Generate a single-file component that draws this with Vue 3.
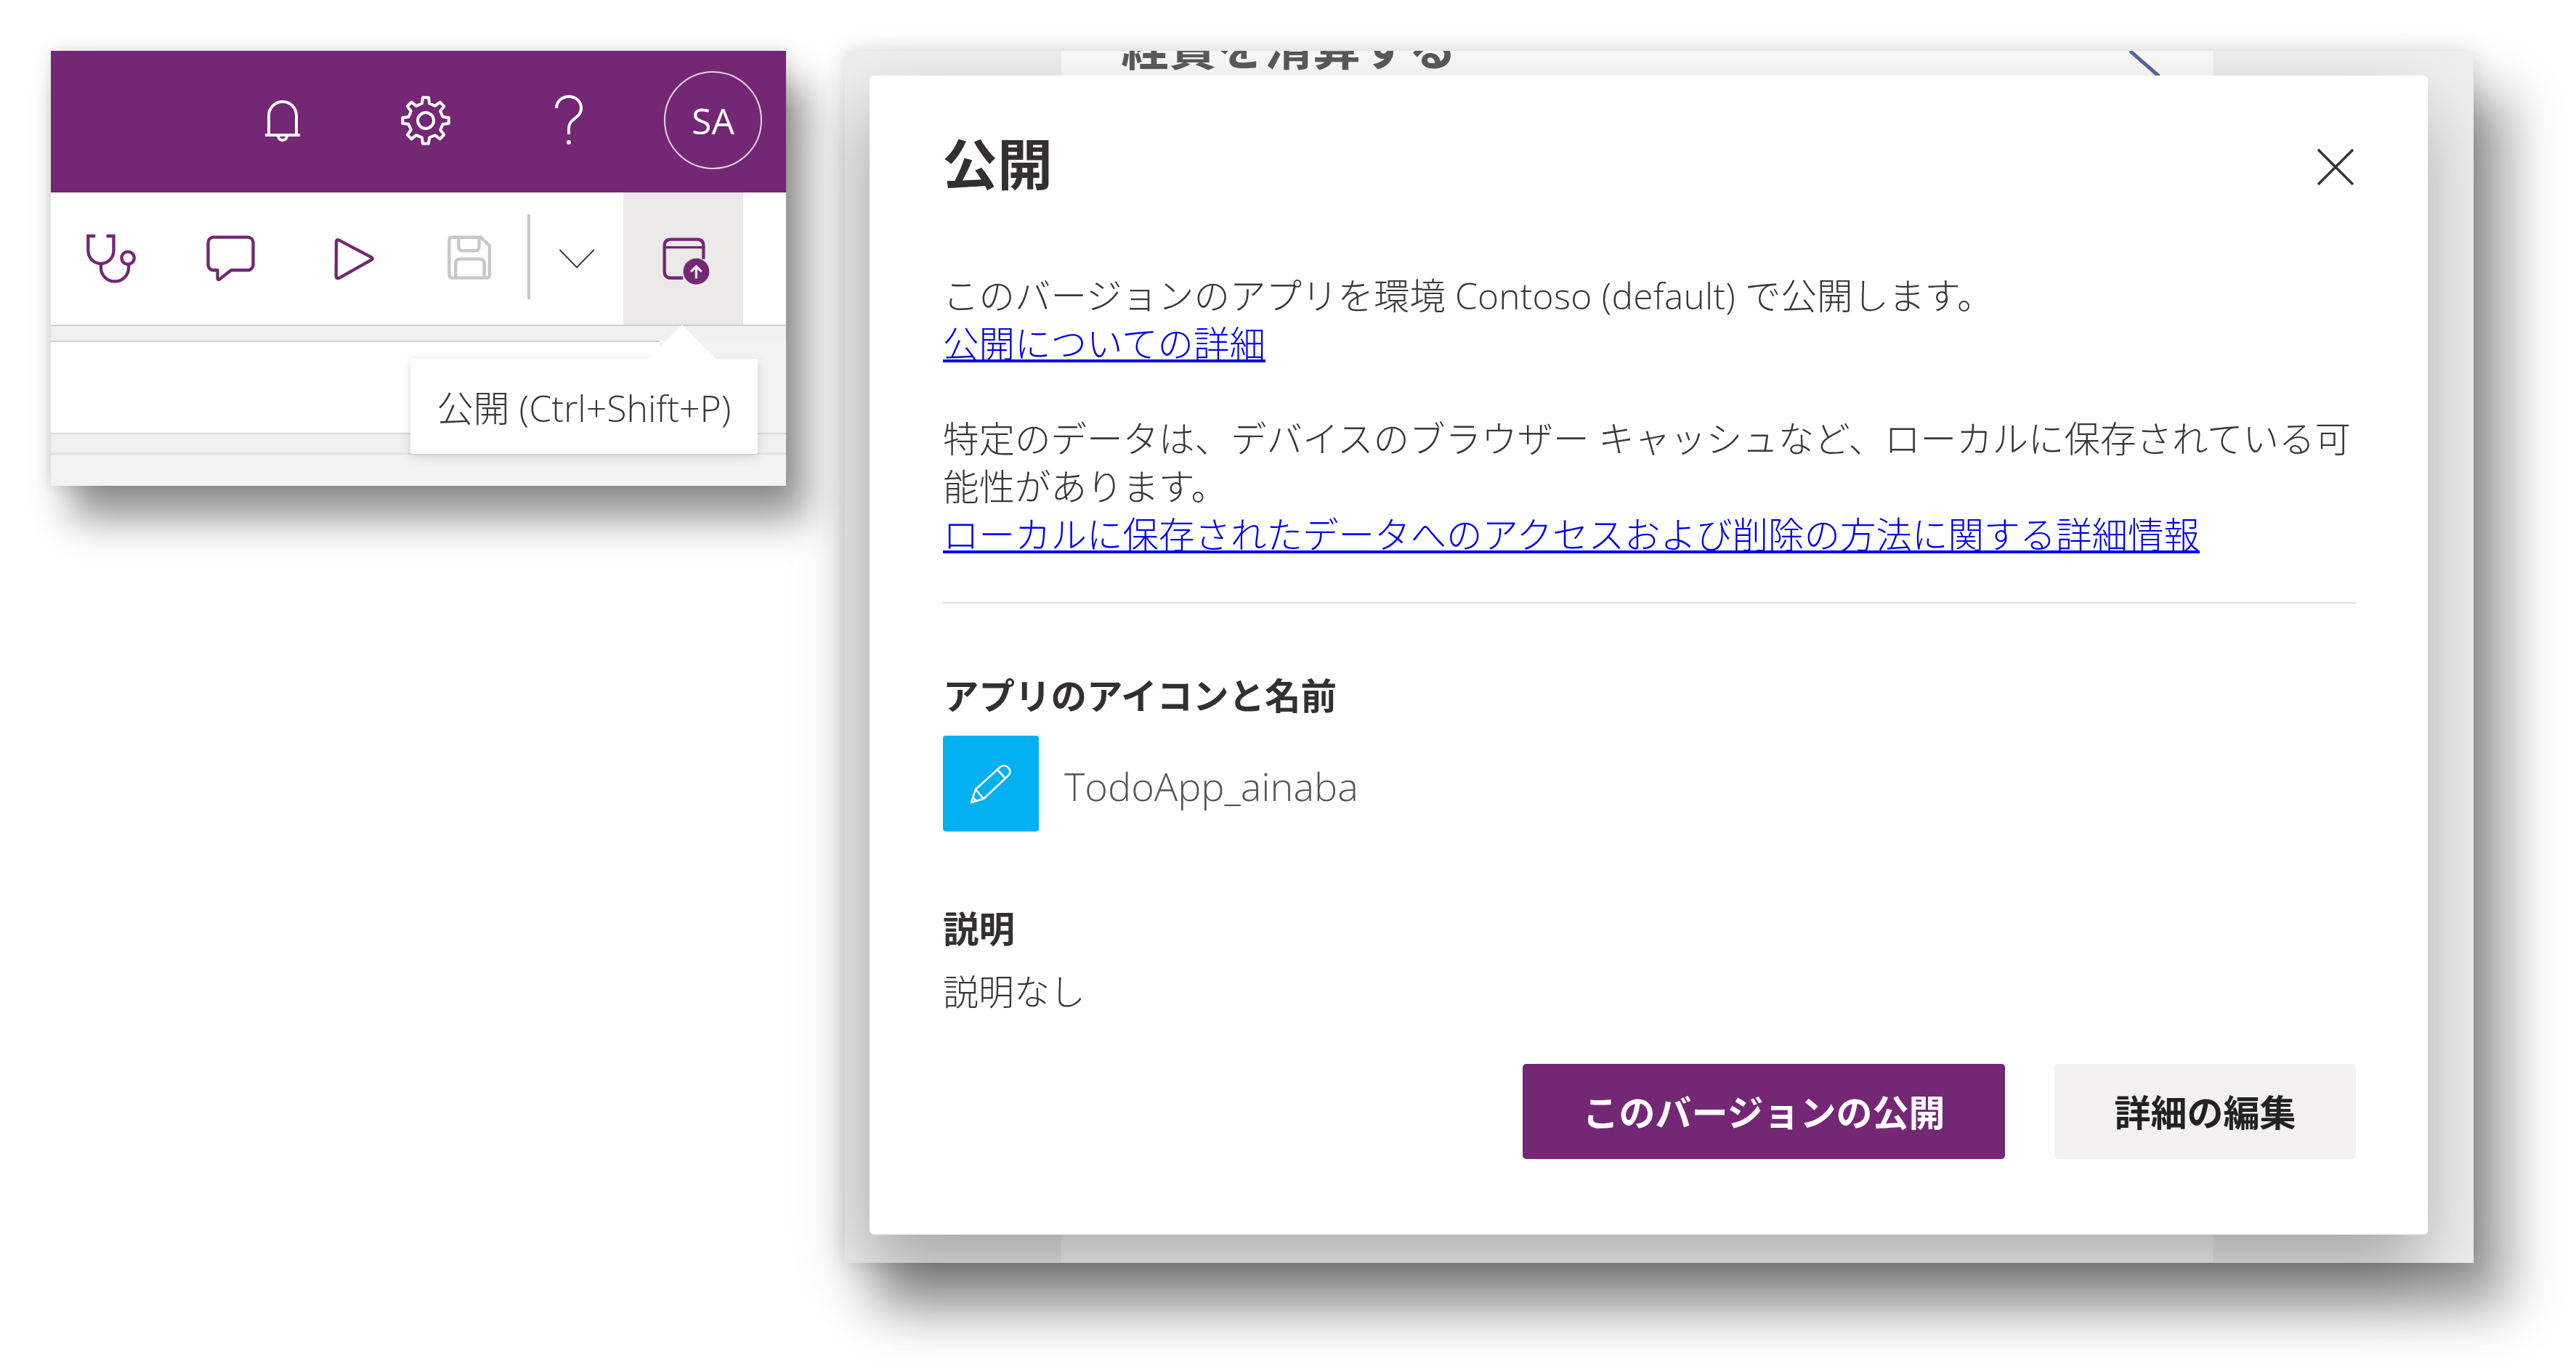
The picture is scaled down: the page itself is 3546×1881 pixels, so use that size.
<script setup>
// Publish flow: the studio toolbar with its tooltip, and the publish dialog.
const cx = 34
const cy = 34

// eight-tooth gear outline, easier to generate than to write by hand
function gearPath(teeth, outer, inner) {
  const step = (Math.PI * 2) / teeth
  const pts = []
  for (let i = 0; i < teeth; i++) {
    const a = i * step
    const w = step * 0.16
    const v = step * 0.27
    pts.push([a - v, inner], [a - w, outer], [a + w, outer], [a + v, inner])
  }
  return pts
    .map(([a, r], i) => `${i ? 'L' : 'M'}${(cx + r * Math.cos(a)).toFixed(1)} ${(cy + r * Math.sin(a)).toFixed(1)}`)
    .join(' ') + ' Z'
}
const gear = gearPath(8, 32, 24)
</script>

<template>
  <div class="page">
    <section class="studio">
      <header class="topbar">
        <span class="top-cell">
          <svg width="52" height="60" viewBox="0 0 52 60" fill="none" stroke="#fff" stroke-width="4">
            <path d="M7 49V23a19 19 0 0 1 38 0V49" />
            <path d="M2 50H50" />
            <path d="M20 51a6 6 0 0 0 12 0" />
          </svg>
        </span>
        <span class="top-cell">
          <svg width="68" height="68" viewBox="0 0 68 68" fill="none" stroke="#fff" stroke-width="4" stroke-linejoin="round">
            <path :d="gear" />
            <circle cx="34" cy="34" r="11" />
          </svg>
        </span>
        <span class="top-cell">
          <svg width="40" height="70" viewBox="0 0 40 70" fill="none" stroke="#fff" stroke-width="4">
            <path d="M3 18C3 8 11 2 20 2C30 2 37 9 37 18C37 26 31 30 26 34C22 37 20 40 20 46V54" />
            <circle cx="20" cy="65" r="3" fill="#fff" stroke="none" />
          </svg>
        </span>
        <span class="avatar">SA</span>
      </header>

      <div class="toolbar">
        <span class="tool">
          <svg width="68" height="68" viewBox="115 155 205 205" fill="none" stroke="#742774" stroke-width="13">
            <path d="M152 164H122V225a53 53 0 0 0 106 0V164H198" />
            <path d="M175 280V295a57 57 0 0 0 115 0V282" />
            <circle cx="287" cy="255" r="26" />
          </svg>
        </span>
        <span class="tool tool-comment">
          <svg width="72" height="65" viewBox="605 170 215 195" fill="none" stroke="#742774" stroke-width="13" stroke-linejoin="round">
            <path d="M643 178H785a22 22 0 0 1 22 22V292a22 22 0 0 1-22 22H716L668 352q-8 4-8-6V314H643a22 22 0 0 1-22-22V200a22 22 0 0 1 22-22Z" />
          </svg>
        </span>
        <span class="tool tool-play">
          <svg width="58" height="60" viewBox="1140 170 175 180" fill="none" stroke="#742774" stroke-width="13" stroke-linejoin="round">
            <path d="M1152 190q0-12 12-6L1298 255q8 6 0 10L1165 340q-12 6-14-6Z" />
          </svg>
        </span>
        <span class="tool tool-save">
          <svg width="64" height="64" viewBox="110 170 190 190" fill="none" stroke="#c8c8c8" stroke-width="13">
            <path d="M120 190q0-12 12-12H248L285 212V330q0 14-14 14H134q-14 0-14-14Z" />
            <path d="M158 180V215q0 18 18 18H228q14 0 14-18V180" />
            <path d="M146 342V285q0-18 18-18H245q18 0 18 18V342" />
          </svg>
        </span>
        <span class="tool-sep"></span>
        <span class="tool tool-more">
          <svg width="50" height="28" viewBox="562 210 152 82" fill="none" stroke="#333" stroke-width="6">
            <path d="M566 214L638 288L710 214" />
          </svg>
        </span>
        <span class="tool tool-active">
          <svg width="68" height="68" viewBox="995 172 205 205" fill="none">
            <path d="M1080 340H1030q-27 0-27-27V207q0-27 27-27H1138q27 0 27 27V262" stroke="#742774" stroke-width="13" />
            <path d="M1003 213H1165" stroke="#742774" stroke-width="10" />
            <circle cx="1135" cy="313" r="54" fill="#742774" />
            <path d="M1135 342V292M1113 314L1135 292L1157 314" stroke="#f2e9f2" stroke-width="10" />
          </svg>
        </span>
      </div>

      <div class="strip"></div>
      <div class="canvas-row"></div>
      <div class="strip strip-low"></div>
      <div class="statusbar"></div>

      <div class="tooltip">公開 (Ctrl+Shift+P)</div>
    </section>

    <section class="backdrop">
      <div class="behind">
        <h2 class="behind-title">経費を清算する</h2>
        <svg class="behind-stroke" width="44" height="36" viewBox="0 0 44 36" fill="none" stroke="#5a64a0" stroke-width="5">
          <path d="M1 0L41 35" />
        </svg>
      </div>

      <div class="dialog">
        <div class="dialog-head">
          <h1>公開</h1>
          <svg width="52" height="52" viewBox="0 0 52 52" fill="none" stroke="#333" stroke-width="3.5">
            <path d="M2 2L50 50M50 2L2 50" />
          </svg>
        </div>

        <p class="body-text">
          このバージョンのアプリを環境 <span class="latin">Contoso (default)</span> で公開します。<br />
          <a href="#">公開についての詳細</a>
        </p>
        <p class="body-text second">
          特定のデータは、デバイスのブラウザー キャッシュなど、ローカルに保存されている可<br />能性があります。<br />
          <a href="#">ローカルに保存されたデータへのアクセスおよび削除の方法に関する詳細情報</a>
        </p>

        <hr class="divider" />

        <h3 class="label">アプリのアイコンと名前</h3>
        <div class="app-row">
          <span class="app-icon">
            <svg width="58" height="56" viewBox="0 0 58 56" fill="none" stroke="#fff" stroke-width="2.6" stroke-linejoin="round">
              <path d="M2 54L8 36L42 5q6-4 11 1q5 5 0 11L19 49Z" />
              <path d="M8 36L19 49M38 9L49 21M4 47L10 53" />
            </svg>
          </span>
          <span class="app-name">TodoApp_ainaba</span>
        </div>

        <h3 class="label label-desc">説明</h3>
        <p class="desc">説明なし</p>

        <div class="actions">
          <button type="button" class="btn btn-primary">このバージョンの公開</button>
          <button type="button" class="btn">詳細の編集</button>
        </div>
      </div>
    </section>
  </div>
</template>

<style>
html, body { margin: 0; background: #fff; }
</style>

<style scoped>
.page {
  display: flex;
  align-items: flex-start;
  gap: 81px;
  width: 3546px;
  height: 1881px;
  padding: 70px 0 0 70px;
  box-sizing: border-box;
  overflow: hidden;
  background: #fff;
  font-family: "Open Sans", "Noto Sans CJK JP", sans-serif;
  color: #383838;
}

/* left: studio toolbar */
.studio {
  position: relative;
  flex: none;
  width: 1012px;
  height: 599px;
  background: #f3f3f3;
  box-shadow: 0 0 22px rgba(0, 0, 0, 0.15), 28px 46px 50px rgba(0, 0, 0, 0.42);
}
.topbar {
  display: flex;
  align-items: center;
  height: 191px;
  padding: 0 0 4px 220px;
  background: #742774;
}
.top-cell {
  display: flex;
  justify-content: center;
  width: 197px;
}
.avatar {
  display: flex;
  align-items: center;
  justify-content: center;
  width: 131px;
  height: 131px;
  margin-left: 33px;
  border: 2px solid #e6d6e6;
  border-radius: 50%;
  color: #fff;
  font-size: 50px;
}
.toolbar {
  display: flex;
  align-items: stretch;
  height: 182px;
  background: #fff;
}
.tool {
  display: flex;
  align-items: center;
  justify-content: center;
  width: 165px;
}
.tool-comment { width: 163px; }
.tool-play { width: 180px; }
.tool-save { width: 138px; }
.tool-sep {
  width: 4px;
  height: 117px;
  margin: 30px 0 0 10px;
  background: #c8c8c8;
}
.tool-more { width: 128px; }
.tool-active {
  padding: 10px 0 0 10px;
  box-sizing: border-box;
  background: #ebeae8;
}
.strip {
  height: 20px;
  background: #f0f0f0;
  border-top: 2px solid #d0d0d0;
}
.canvas-row {
  width: 838px;
  height: 125px;
  background: #fff;
  border-top: 2px solid #d0d0d0;
}
.strip-low {
  height: 26px;
  border-top-color: #d8d8d8;
}
.statusbar {
  height: 45px;
  border-top: 2px solid #dcdcdc;
}
.tooltip {
  position: absolute;
  left: 495px;
  top: 424px;
  width: 478px;
  height: 131px;
  border-radius: 4px;
  background: #fff;
  box-shadow: 0 4px 16px rgba(0, 0, 0, 0.14);
  display: flex;
  align-items: center;
  justify-content: center;
  font-size: 50px;
  font-weight: 300;
  white-space: nowrap;
}
.tooltip::before {
  content: "";
  position: absolute;
  left: 327px;
  top: -47px;
  border-left: 47px solid transparent;
  border-right: 47px solid transparent;
  border-bottom: 47px solid #fff;
}

/* right: dialog on its dimmed page */
.backdrop {
  position: relative;
  flex: none;
  width: 2242px;
  height: 1669px;
  background: #eee;
  box-shadow: 0 0 30px rgba(0, 0, 0, 0.15), 46px 62px 70px rgba(0, 0, 0, 0.4);
}
.behind {
  position: relative;
  height: 100%;
  margin: 0 358px 0 298px;
  padding-left: 82px;
  overflow: hidden;
  background: #fafafa;
}
.behind-title {
  margin: -38px 0 0;
  font-size: 66px;
  line-height: 65px;
  font-weight: 700;
  color: #5a5a5a;
}
.behind-stroke {
  position: absolute;
  left: 1470px;
  top: 0;
}
.dialog {
  position: absolute;
  left: 34px;
  top: 34px;
  width: 2145px;
  height: 1596px;
  padding: 0 99px 0 101px;
  box-sizing: border-box;
  border-radius: 6px;
  background: #fff;
  box-shadow: -5px 50px 100px rgba(0, 0, 0, 0.3);
}
.dialog-head {
  display: flex;
  align-items: center;
  justify-content: space-between;
  height: 100px;
  padding: 72px 2px 98px 0;
}
.dialog-head h1 {
  margin: 0 0 8px -1px;
  font-size: 76px;
  font-weight: 700;
  color: #323130;
}
.dialog-head svg { margin-top: 8px; }
.body-text {
  margin: 0;
  font-size: 49.5px;
  line-height: 66px;
  font-weight: 300;
  white-space: nowrap;
}
.latin { letter-spacing: 0.3px; }
.body-text.second { margin-top: 65px; }
.body-text a { color: #0000ee; }
.divider {
  height: 3px;
  margin: 60px 0 93px;
  border: 0;
  background: #e6e6e6;
}
.label {
  margin: 0;
  font-size: 49.5px;
  line-height: 66px;
  font-weight: 700;
  color: #323130;
}
.app-row {
  display: flex;
  align-items: center;
  gap: 35px;
  margin-top: 22px;
}
.app-icon {
  display: flex;
  align-items: center;
  justify-content: center;
  width: 132px;
  height: 132px;
  border-radius: 4px;
  background: #00b0f0;
}
.app-name {
  padding-top: 6px;
  font-size: 54px;
  font-weight: 300;
  color: #555;
}
.label-desc { margin-top: 101px; }
.desc {
  margin: 20px 0 0;
  font-size: 49px;
  line-height: 66px;
  font-weight: 300;
}
.actions {
  display: flex;
  justify-content: flex-end;
  gap: 68px;
  margin-top: 67px;
}
.btn {
  width: 415px;
  height: 131px;
  padding: 0 0 2px;
  border: 0;
  border-radius: 5px;
  background: #f3f2f1;
  color: #222;
  font: inherit;
  font-size: 50px;
  font-weight: 700;
}
.btn-primary {
  width: 664px;
  background: #742774;
  color: #fff;
}
</style>
